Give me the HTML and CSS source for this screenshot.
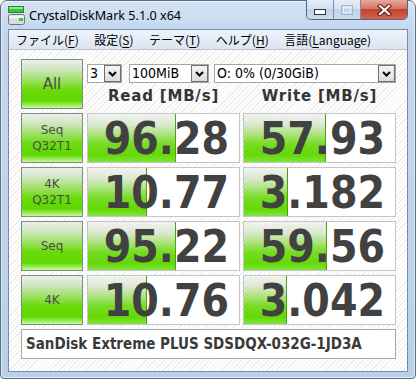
FILE: index.html
```html
<!DOCTYPE html>
<html lang="ja">
<head>
<meta charset="utf-8">
<title>CrystalDiskMark 5.1.0 x64</title>
<link rel="stylesheet" href="styles.css">
</head>
<body>
<div class="window">
  <div class="titlebar">
    <svg class="appicon" width="17" height="19" viewBox="0 0 17 19">
      <rect x="0.5" y="0.5" width="15" height="6" fill="#3cc43c" stroke="#2a8a2a"/>
      <rect x="1" y="1" width="14" height="2" fill="#8ee88e"/>
      <rect x="0.5" y="8.5" width="16" height="10" rx="2" fill="#d8dcdf" stroke="#6c7378"/>
      <rect x="1.5" y="9.5" width="14" height="3" fill="#f2f4f5"/>
      <rect x="11" y="12" width="4" height="3" fill="#33cc33"/>
    </svg>
    <span class="title">CrystalDiskMark 5.1.0 x64</span>
    <div class="caption">
      <div class="cbtn min">
        <svg width="12" height="6" viewBox="0 0 12 6"><rect x="0.5" y="0.5" width="11" height="5" fill="#fff" stroke="#2a3442"/></svg>
      </div>
      <div class="cbtn max">
        <svg width="12" height="10" viewBox="0 0 12 10"><rect x="0.5" y="0.5" width="11" height="9" fill="none" stroke="#a9b6c6"/><rect x="2.5" y="2.5" width="7" height="5" fill="none" stroke="#eef2f8"/></svg>
      </div>
      <div class="cbtn close">
        <svg width="15" height="12" viewBox="0 0 15 12"><path d="M3 2 L12 10 M12 2 L3 10" stroke="#5a1a12" stroke-width="4.2" stroke-linecap="square"/><path d="M3 2 L12 10 M12 2 L3 10" stroke="#fff" stroke-width="2.2" stroke-linecap="square"/></svg>
      </div>
    </div>
  </div>
  <div class="client">
    <div class="menubar">
      <span class="mi">ファイル(<u>F</u>)</span>
      <span class="mi">設定(<u>S</u>)</span>
      <span class="mi">テーマ(<u>T</u>)</span>
      <span class="mi">ヘルプ(<u>H</u>)</span>
      <span class="mi">言語(<u>L</u>anguage)</span>
    </div>
    <div class="content">
      <div class="row">
        <div class="btn all">All</div>
        <div class="topright">
          <div class="selectors">
            <div class="combo c1"><span class="ctext">3</span><span class="arrow"><svg width="9" height="6" viewBox="0 0 9 6"><path d="M1 1 L4.5 4.5 L8 1" stroke="#000" stroke-width="2" fill="none"/></svg></span></div>
            <div class="combo c2"><span class="ctext">100MiB</span><span class="arrow"><svg width="9" height="6" viewBox="0 0 9 6"><path d="M1 1 L4.5 4.5 L8 1" stroke="#000" stroke-width="2" fill="none"/></svg></span></div>
            <div class="combo c3"><span class="ctext">O: 0% (0/30GiB)</span><span class="arrow"><svg width="9" height="6" viewBox="0 0 9 6"><path d="M1 1 L4.5 4.5 L8 1" stroke="#000" stroke-width="2" fill="none"/></svg></span></div>
          </div>
          <div class="headers">
            <div class="hd read">Read [MB/s]</div>
            <div class="hd write">Write [MB/s]</div>
          </div>
        </div>
      </div>
      <div class="row">
        <div class="btn lbl">Seq<br>Q32T1</div>
        <div class="val read" style="--w:88px">96.28</div>
        <div class="val write" style="--w:82px">57.93</div>
      </div>
      <div class="row">
        <div class="btn lbl">4K<br>Q32T1</div>
        <div class="val read" style="--w:59px">10.77</div>
        <div class="val write" style="--w:44px">3.182</div>
      </div>
      <div class="row">
        <div class="btn lbl">Seq</div>
        <div class="val read" style="--w:88px">95.22</div>
        <div class="val write" style="--w:83px">59.56</div>
      </div>
      <div class="row">
        <div class="btn lbl">4K</div>
        <div class="val read" style="--w:59px">10.76</div>
        <div class="val write" style="--w:43px">3.042</div>
      </div>
      <div class="name">SanDisk Extreme PLUS SDSDQX-032G-1JD3A</div>
    </div>
  </div>
</div>
</body>
</html>
```

FILE: styles.css
```css
* { box-sizing: border-box; }
html, body { margin: 0; padding: 0; }
body { width: 416px; height: 379px; overflow: hidden; background: #fff; }

.window {
  width: 416px;
  height: 379px;
  border: 1px solid #5d6c80;
  border-radius: 7px 7px 4px 4px;
  background: linear-gradient(#d5e4f5 0px, #c3d8ef 28px, #b9d0ea 379px);
  box-shadow: inset 0 0 0 1px rgba(255,255,255,0.55);
  display: flex;
  flex-direction: column;
}

.titlebar {
  height: 28px;
  display: flex;
  align-items: center;
  padding-left: 7px;
}
.appicon { margin-top: 1px; flex: none; }
.title {
  margin-left: 4px;
  font-family: "Noto Sans", "DejaVu Sans", sans-serif;
  font-size: 12.6px;
  color: #000;
  margin-top: 1px;
}
.caption {
  margin-left: auto;
  margin-right: 7px;
  align-self: flex-start;
  margin-top: -1px;
  display: flex;
  height: 20px;
  border: 1px solid #56677d;
  border-top: none;
  border-radius: 0 0 5px 5px;
  overflow: hidden;
}
.cbtn {
  height: 19px;
  display: flex;
  align-items: center;
  justify-content: center;
}
.min, .max {
  width: 27px;
  background: linear-gradient(#e5edf7 0%, #d6e2f1 45%, #c2d3e8 50%, #cbdcf0 100%);
  border-right: 1px solid #7d8ea5;
}
.min { border-radius: 0 0 0 4px; }
.min svg { margin-top: 5px; }
.close {
  width: 46px;
  background: linear-gradient(#e6a898 0%, #d77564 45%, #c4412c 50%, #d1634f 100%);
}

.client {
  margin: 0 7px;
  height: 343px;
  border: 1px solid #7b8ca2;
  background: #fff;
  display: flex;
  flex-direction: column;
}

.menubar {
  height: 20px;
  border-bottom: 1px solid #b7c3d2;
  background: linear-gradient(#eef3fa, #dbe5f2);
  display: flex;
  align-items: center;
  padding-left: 7px;
  font-family: "Noto Sans CJK JP", "Noto Sans", sans-serif;
  font-size: 12px;
  color: #000;
}
.mi { padding-right: 15.5px; line-height: 19px; }
.mi u { text-decoration-thickness: 1px; text-underline-offset: 2px; }

.content {
  flex: 1;
  padding: 9px 0 0 12px;
  background: repeating-linear-gradient(135deg, #ffffff 0px, #ffffff 2.2px, #ededed 2.2px, #ededed 3.2px);
}

.row {
  display: flex;
  height: 50px;
  margin-bottom: 4px;
}

.btn {
  width: 62px;
  height: 50px;
  margin-right: 4px;
  border: 1px solid #7f8c80;
  background: linear-gradient(#eceeed 0%, #cfe6bf 20%, #96e058 45%, #6bdb0c 62%, #5ed800 85%, #9cee5c 94%, #c8f7a0 100%);
  display: flex;
  align-items: center;
  justify-content: center;
  text-align: center;
  font-family: "DejaVu Sans", sans-serif;
  color: #4c4c4c;
}
.all { font-size: 15px; }
.lbl { font-size: 12px; line-height: 16px; }

.topright { width: 309px; display: flex; flex-direction: column; }
.selectors { display: flex; margin-top: 5px; height: 19px; }
.combo {
  height: 19px;
  border: 1px solid #a3a6ab;
  background: #fff;
  display: flex;
  align-items: center;
  font-family: "DejaVu Sans Condensed", "DejaVu Sans", sans-serif;
  font-size: 14px;
  color: #000;
}
.ctext { flex: 1; padding-left: 2px; white-space: nowrap; overflow: hidden; line-height: 17px; }
.arrow {
  width: 17px;
  height: 17px;
  border: 1px solid #707070;
  background: linear-gradient(#f4f4f4, #dcdcdc);
  display: flex;
  align-items: center;
  justify-content: center;
}
.c1 { width: 35px; margin-right: 7px; }
.c2 { width: 80px; margin-right: 5px; }
.c3 { width: 182px; }

.headers { display: flex; margin-top: 3px; }
.hd {
  width: 153px;
  text-align: center;
  font-family: "DejaVu Sans", sans-serif;
  font-weight: bold;
  font-size: 15px;
  letter-spacing: 0.8px;
  line-height: 20px;
  color: #353535;
}
.hd.read { margin-right: 3px; }

.val {
  width: 153px;
  height: 50px;
  border: 1px solid #c6c6c6;
  background:
    linear-gradient(to right, transparent calc(var(--w) - 1px), #4e9f1a calc(var(--w) - 1px), #4e9f1a var(--w), transparent var(--w)),
    linear-gradient(#f2f3f1 0%, #dbe9d0 22%, #a6e272 45%, #78dc26 62%, #64d806 85%, #80e43a 100%) 0 0 / var(--w) 100% no-repeat,
    #fff;
  text-align: right;
  padding: 2px 10px 0 0;
  font-family: "DejaVu Sans Condensed", "DejaVu Sans", sans-serif;
  font-weight: bold;
  font-size: 44px;
  line-height: 46px;
  color: #414141;
}
.val.read { margin-right: 3px; }

.name {
  margin-top: 4px;
  width: 375px;
  height: 30px;
  border: 1px solid #a9a9a9;
  background: #fff;
  padding-left: 4px;
  font-family: "DejaVu Sans Condensed", "DejaVu Sans", sans-serif;
  font-weight: bold;
  font-size: 15px;
  line-height: 28px;
  color: #3a3a3a;
  white-space: nowrap;
}
```
